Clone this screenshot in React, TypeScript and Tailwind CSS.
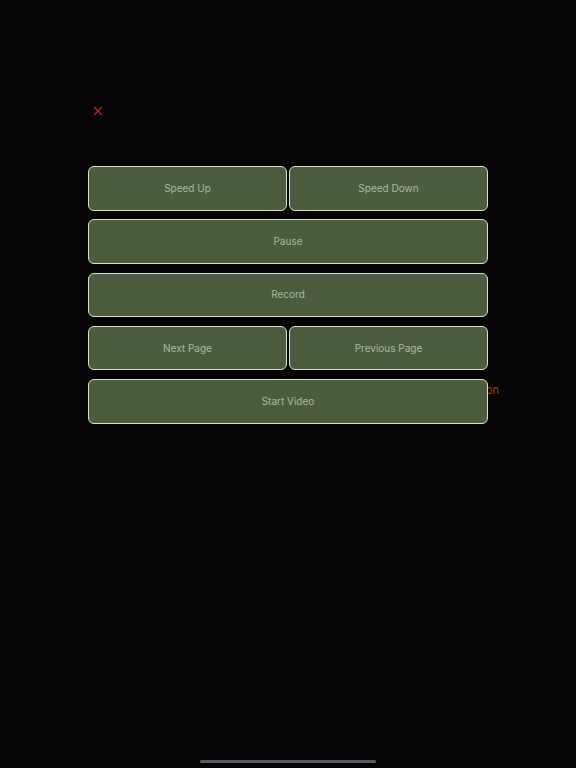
import { X } from "lucide-react";

type Btn = { label: string };

const rows: Btn[][] = [
  [{ label: "Speed Up" }, { label: "Speed Down" }],
  [{ label: "Pause" }],
  [{ label: "Record" }],
  [{ label: "Next Page" }, { label: "Previous Page" }],
  [{ label: "Start Video" }],
];

function ControlButton({ label }: Btn) {
  return (
    <button className="flex h-[44.5px] flex-1 items-center justify-center rounded-[6px] border-[1.5px] border-[#d6e6c6] bg-[#4b5d3c] text-[10px] text-[#adb8a0]">
      {label}
    </button>
  );
}

export default function App() {
  return (
    <div className="relative h-[768px] w-[576px] overflow-hidden bg-[#050305] font-['Inter',sans-serif]">
      {/* close */}
      <div className="pl-[91px] pt-[104px]">
        <X className="h-[14px] w-[14px] text-[#d0242c]" strokeWidth={2} />
      </div>

      {/* hint text peeking out behind the last button */}
      <span className="absolute left-[486px] top-[382px] text-[11px] text-[#a0421c]">
        on
      </span>

      {/* controls */}
      <div className="relative mt-[48px] ml-[88px] flex w-[400px] flex-col gap-[8.75px]">
        {rows.map((row, i) => (
          <div key={i} className="flex gap-[2px]">
            {row.map((b) => (
              <ControlButton key={b.label} label={b.label} />
            ))}
          </div>
        ))}
      </div>

      {/* home indicator */}
      <div className="absolute bottom-[5px] left-[200px] h-[3px] w-[176px] rounded-full bg-[#5a5a5e]" />
    </div>
  );
}
